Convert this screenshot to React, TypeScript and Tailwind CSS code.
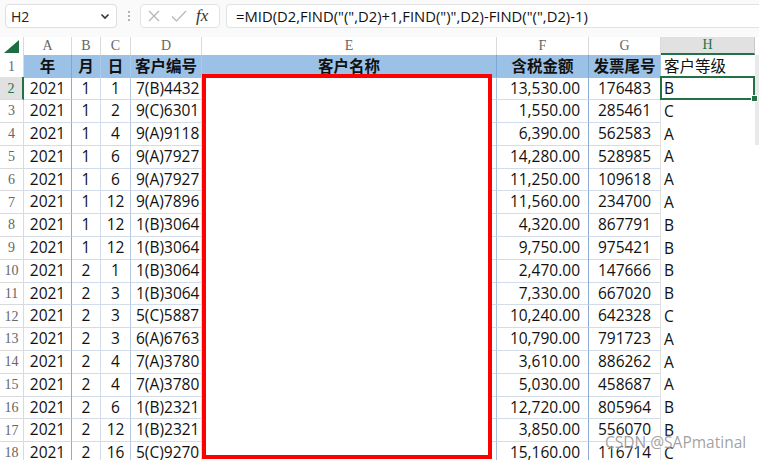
const data: string[][] = [
  ["2021", "1", "1", "7(B)4432", "13,530.00", "176483", "B"],
  ["2021", "1", "2", "9(C)6301", "1,550.00", "285461", "C"],
  ["2021", "1", "4", "9(A)9118", "6,390.00", "562583", "A"],
  ["2021", "1", "6", "9(A)7927", "14,280.00", "528985", "A"],
  ["2021", "1", "6", "9(A)7927", "11,250.00", "109618", "A"],
  ["2021", "1", "12", "9(A)7896", "11,560.00", "234700", "A"],
  ["2021", "1", "12", "1(B)3064", "4,320.00", "867791", "B"],
  ["2021", "1", "12", "1(B)3064", "9,750.00", "975421", "B"],
  ["2021", "2", "1", "1(B)3064", "2,470.00", "147666", "B"],
  ["2021", "2", "3", "1(B)3064", "7,330.00", "667020", "B"],
  ["2021", "2", "3", "5(C)5887", "10,240.00", "642328", "C"],
  ["2021", "2", "3", "6(A)6763", "10,790.00", "791723", "A"],
  ["2021", "2", "4", "7(A)3780", "3,610.00", "886262", "A"],
  ["2021", "2", "4", "7(A)3780", "5,030.00", "458687", "A"],
  ["2021", "2", "6", "1(B)2321", "12,720.00", "805964", "B"],
  ["2021", "2", "12", "1(B)2321", "3,850.00", "556070", "B"],
  ["2021", "2", "16", "5(C)9270", "15,160.00", "116714", "C"],
];

const cols = "grid grid-cols-[24px_48px_29px_30px_71px_295px_92px_72px_94px_1fr]";
const serif = "font-['Liberation_Serif',serif]";

function Toolbar() {
  return (
    <div className="flex h-[37px] items-start bg-[#fafafa] pt-[4px]">
      <div className="ml-[5px] flex h-[24px] w-[112px] items-center justify-between rounded-[4px] border border-[#dedede] bg-white pl-[5px] pr-[5px]">
        <span className="text-[14px] text-[#222]">H2</span>
        <svg width="12" height="12" viewBox="0 0 12 12">
          <path d="M2.5 4.5 L6 8 L9.5 4.5" fill="none" stroke="#333" strokeWidth="1.6" />
        </svg>
      </div>
      <div className="flex h-[24px] w-[23px] flex-col items-center justify-center gap-[2px]">
        <span className="h-[2px] w-[2px] rounded-full bg-[#9a9a9a]" />
        <span className="h-[2px] w-[2px] rounded-full bg-[#9a9a9a]" />
        <span className="h-[2px] w-[2px] rounded-full bg-[#9a9a9a]" />
      </div>
      <div className="flex h-[24px] w-[80px] items-center rounded-[4px] border border-[#e3e3e3] bg-white pl-[5px]">
        <svg width="16" height="16" viewBox="0 0 16 16">
          <path d="M3 3 L13 13 M13 3 L3 13" stroke="#b5b5b5" strokeWidth="1.2" />
        </svg>
        <svg width="18" height="16" viewBox="0 0 18 16" className="ml-[8px]">
          <path d="M2 8.5 L6.5 13 L16 3" fill="none" stroke="#b5b5b5" strokeWidth="1.2" />
        </svg>
        <span className={`ml-[8px] text-[17px] italic text-[#333] ${serif}`}>fx</span>
      </div>
      <div className="ml-[6px] flex h-[24px] flex-1 items-center rounded-l-[4px] border border-r-0 border-[#e3e3e3] bg-white pl-[9px]">
        <span className="whitespace-nowrap text-[14.8px] text-[#111]">
          =MID(D2,FIND("(",D2)+1,FIND(")",D2)-FIND("(",D2)-1)
        </span>
      </div>
    </div>
  );
}

function ColumnHeader() {
  const letters = ["A", "B", "C", "D", "E", "F", "G", "H"];
  return (
    <div className={`${cols} h-[18px] bg-white`}>
      <div className="flex items-end justify-center border-r border-[#dadada] pb-[2px]">
        <svg width="15" height="13" viewBox="0 0 15 13">
          <path d="M15 0 L15 13 L0 13 Z" fill="#1f6e43" />
        </svg>
      </div>
      {letters.map((l) => (
        <div
          key={l}
          className={`flex items-center justify-center border-r text-[14px] leading-none ${serif} ${
            l === "H"
              ? "border-[#c8c8c8] border-b-2 border-b-[#217346] bg-[#e1e1e1] text-[#217346]"
              : "border-[#dadada] text-[#666]"
          }`}
        >
          {l}
        </div>
      ))}
      <div className="bg-white" />
    </div>
  );
}

function RowNum({ n, active }: { n: number; active?: boolean }) {
  return (
    <div
      className={`flex items-center justify-center border-b border-r text-[14px] ${serif} ${
        active
          ? "border-b-[#dadada] border-r-2 border-r-[#217346] bg-[#e1e1e1] text-[#217346]"
          : "border-[#dadada] text-[#666]"
      }`}
    >
      {n}
    </div>
  );
}

function HeaderRow() {
  const heads = ["年", "月", "日", "客户编号", "客户名称", "含税金额", "发票尾号"];
  return (
    <div className={`${cols} h-[22px]`}>
      <RowNum n={1} />
      {heads.map((h, i) => (
        <div
          key={h}
          className={`flex items-center justify-center whitespace-nowrap bg-[#9bc2e6] text-[15.5px] font-bold text-[#111] ${
            i === 0 || i === 4 || i === 5 ? "border-r border-[#7ea6d2]" : "border-r border-[#a9c9e8]"
          }`}
        >
          {h}
        </div>
      ))}
      <div className="flex items-center pl-[3px] text-[15.5px] text-[#111]">客户等级</div>
      <div className="bg-[#e9e9e9]" />
    </div>
  );
}

function DataRow({ r, n }: { r: string[]; n: number }) {
  const cell = "flex items-center whitespace-nowrap overflow-hidden border-b border-r";
  return (
    <div className={`${cols} h-[22.8px] text-[15.5px] text-[#111]`}>
      <RowNum n={n} active={n === 2} />
      <div className={`${cell} justify-center border-[#d3dcea] border-r-[#8eabd8]`}>{r[0]}</div>
      <div className={`${cell} justify-center border-[#d3dcea]`}>{r[1]}</div>
      <div className={`${cell} justify-center border-[#d3dcea] border-r-[#b7c9e3]`}>{r[2]}</div>
      <div className={`${cell} pl-[5px] border-[#d3dcea]`}>{r[3]}</div>
      <div className={`${cell} border-[#d3dcea] border-r-[#a8bfe0]`} />
      <div className={`${cell} justify-end pr-[8px] border-[#d3dcea] border-r-[#8eabd8]`}>{r[4]}</div>
      <div className={`${cell} justify-center border-[#d3dcea] border-r-[#e2e2e2]`}>{r[5]}</div>
      <div className="relative flex items-center pl-[3px]">
        {r[6]}
        {n === 2 && (
          <div className="absolute -left-[1px] -top-[1px] right-0 bottom-0 border-2 border-[#217346]">
            <span className="absolute -bottom-[3px] -right-[4px] h-[5px] w-[5px] bg-[#217346] ring-1 ring-white" />
          </div>
        )}
      </div>
      <div className={n <= 4 ? "bg-[#e9e9e9]" : "bg-white"} />
    </div>
  );
}

export default function App() {
  return (
    <div className="relative h-[460px] w-[759px] overflow-hidden bg-white font-['Open_Sans','Noto_Sans_CJK_SC',sans-serif]">
      <Toolbar />
      <ColumnHeader />
      <HeaderRow />
      {data.map((r, i) => (
        <DataRow key={i} r={r} n={i + 2} />
      ))}
      <div className="absolute left-[202px] top-[74px] h-[385px] w-[290px] border-4 border-[#ff0000] bg-white" />
      <div className="absolute left-[605px] top-[431px] whitespace-nowrap text-[15.5px] text-[#8a8a8a]/80 [text-shadow:0_0_2px_#fff]">
        CSDN @SAPmatinal
      </div>
    </div>
  );
}
